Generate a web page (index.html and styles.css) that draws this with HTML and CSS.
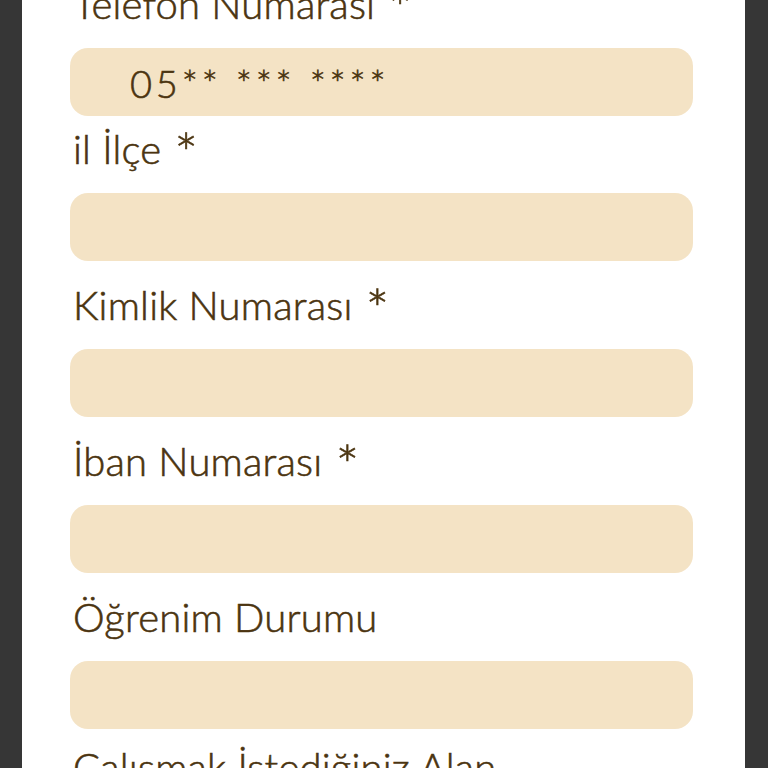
FILE: index.html
```html
<!DOCTYPE html>
<html lang="tr">
<head>
<meta charset="utf-8">
<title>Başvuru Formu</title>
<link rel="stylesheet" href="styles.css">
</head>
<body>
<div class="frame">
  <form class="panel">
    <div class="field field-first">
      <label class="label">Telefon Numarası <span class="req">*</span></label>
      <div class="input input-phone">05** *** ****</div>
    </div>
    <div class="field">
      <label class="label">il İlçe <span class="req">*</span></label>
      <div class="input"></div>
    </div>
    <div class="field">
      <label class="label">Kimlik Numarası <span class="req">*</span></label>
      <div class="input"></div>
    </div>
    <div class="field">
      <label class="label">İban Numarası <span class="req">*</span></label>
      <div class="input"></div>
    </div>
    <div class="field field-short">
      <label class="label">Öğrenim Durumu</label>
      <div class="input"></div>
    </div>
    <div class="field">
      <label class="label">Çalışmak İstediğiniz Alan</label>
      <div class="input"></div>
    </div>
  </form>
</div>
</body>
</html>
```

FILE: styles.css
```css
html, body {
  margin: 0;
  padding: 0;
  background: #363636;
  height: 768px;
  overflow: hidden;
}

.frame {
  display: flex;
  padding: 0 23px 0 22px;
}

.panel {
  flex: 1;
  background: #ffffff;
  margin: -16px 0 0 0;
  padding: 0 52px 0 48px;
  min-height: 900px;
  font-family: Lato, "Liberation Sans", sans-serif;
  font-weight: 300;
  color: #4b3410;
  -webkit-text-stroke: 0.6px #4b3410;
}

.field {
  display: flex;
  flex-direction: column;
  margin-bottom: 24px;
}

.field-first {
  margin-bottom: 13px;
}

.field-short {
  margin-bottom: 18px;
}

.label {
  display: block;
  font-size: 40px;
  line-height: 40px;
  height: 40px;
  margin: 0 0 24px 3px;
  white-space: nowrap;
  letter-spacing: 0.2px;
}

.req {
  font-size: 56px;
  line-height: 0;
  vertical-align: -10px;
  margin-left: 2px;
}

.input {
  height: 68px;
  background: #f4e3c5;
  border-radius: 18px;
  display: flex;
  align-items: center;
  box-sizing: border-box;
}

.input-phone {
  padding-left: 60px;
  font-size: 38px;
  letter-spacing: 3.8px;
  padding-top: 2px;
}
```
